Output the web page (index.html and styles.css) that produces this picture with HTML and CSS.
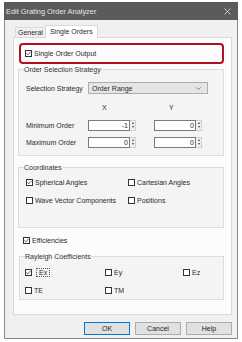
FILE: index.html
```html
<!DOCTYPE html>
<html lang="en">
<head>
    <meta charset="UTF-8">
    <title>Edit Grating Order Analyzer</title>
    <link rel="stylesheet" href="styles.css">
</head>
<body>
    <div class="window">
        <div class="titlebar">
            <span class="title">Edit Grating Order Analyzer</span>
            <svg class="close" width="7" height="7" viewBox="0 0 7 7"><path d="M0.5 0.5 L6.5 6.5 M6.5 0.5 L0.5 6.5" stroke="#d8d8d8" stroke-width="0.9"/></svg>
        </div>
        <div class="client">
            <div class="tabs">
                <div class="tab">General</div>
                <div class="tab active">Single Orders</div>
            </div>
            <div class="panel">
                <div class="highlight">
                    <label class="check">
                        <span class="box"><svg width="5" height="5" viewBox="0 0 5 5"><path d="M0.4 2.4 L1.8 3.8 L4.6 0.8" stroke="#333" stroke-width="0.8" fill="none"/></svg></span>
                        Single Order Output
                    </label>
                </div>

                <fieldset class="group strategy">
                    <legend>Order Selection Strategy</legend>
                    <div class="row combo-row">
                        <span class="label">Selection Strategy</span>
                        <div class="combo">
                            <span>Order Range</span>
                            <svg width="5" height="3" viewBox="0 0 5 3"><path d="M0.3 0.4 L2.5 2.5 L4.7 0.4" stroke="#555" stroke-width="0.7" fill="none"/></svg>
                        </div>
                    </div>
                    <div class="row axis-row">
                        <span class="label"></span>
                        <span class="axis x">X</span>
                        <span class="axis y">Y</span>
                    </div>
                    <div class="row num-row first">
                        <span class="label">Minimum Order</span>
                        <div class="spin">
                            <span class="field">-1</span>
                            <span class="arrows"><i class="up"></i><i class="down"></i></span>
                        </div>
                        <div class="spin">
                            <span class="field">0</span>
                            <span class="arrows"><i class="up"></i><i class="down"></i></span>
                        </div>
                    </div>
                    <div class="row num-row">
                        <span class="label">Maximum Order</span>
                        <div class="spin">
                            <span class="field">0</span>
                            <span class="arrows"><i class="up"></i><i class="down"></i></span>
                        </div>
                        <div class="spin">
                            <span class="field">0</span>
                            <span class="arrows"><i class="up"></i><i class="down"></i></span>
                        </div>
                    </div>
                </fieldset>

                <fieldset class="group coords">
                    <legend>Coordinates</legend>
                    <div class="row opt-row first">
                        <label class="check c1">
                            <span class="box"><svg width="5" height="5" viewBox="0 0 5 5"><path d="M0.4 2.4 L1.8 3.8 L4.6 0.8" stroke="#333" stroke-width="0.8" fill="none"/></svg></span>
                            Spherical Angles
                        </label>
                        <label class="check"><span class="box"></span>Cartesian Angles</label>
                    </div>
                    <div class="row opt-row">
                        <label class="check c1"><span class="box"></span>Wave Vector Components</label>
                        <label class="check"><span class="box"></span>Positions</label>
                    </div>
                </fieldset>

                <div class="row eff-row">
                    <label class="check">
                        <span class="box"><svg width="5" height="5" viewBox="0 0 5 5"><path d="M0.4 2.4 L1.8 3.8 L4.6 0.8" stroke="#333" stroke-width="0.8" fill="none"/></svg></span>
                        Efficiencies
                    </label>
                </div>

                <fieldset class="group rayleigh">
                    <legend>Rayleigh Coefficients</legend>
                    <div class="row opt-row first">
                        <label class="check r1">
                            <span class="box"><svg width="5" height="5" viewBox="0 0 5 5"><path d="M0.4 2.4 L1.8 3.8 L4.6 0.8" stroke="#333" stroke-width="0.8" fill="none"/></svg></span>
                            <span class="focus">Ex</span>
                        </label>
                        <label class="check r2"><span class="box"></span>Ey</label>
                        <label class="check"><span class="box"></span>Ez</label>
                    </div>
                    <div class="row opt-row">
                        <label class="check r1"><span class="box"></span>TE</label>
                        <label class="check r2"><span class="box"></span>TM</label>
                    </div>
                </fieldset>
            </div>
            <div class="buttons">
                <button class="default">OK</button>
                <button>Cancel</button>
                <button>Help</button>
            </div>
        </div>
    </div>
</body>
</html>
```

FILE: styles.css
```css
body {
    margin: 0;
    background: #fff;
    font-family: 'Liberation Sans', Arial, sans-serif;
    font-size: 7px;
    color: #2b2b2b;
}

.window {
    margin: 2px 0 0 4px;
    width: 234px;
    height: 337px;
    box-sizing: border-box;
    border: 1px solid #8a8a8a;
    border-top: none;
    background: #f0f0f0;
}

.titlebar {
    height: 18px;
    background: #5b5b5b;
    color: #e6e6e6;
    display: flex;
    align-items: center;
    justify-content: space-between;
    padding: 0 7px 0 2px;
    margin: 0 -1px;
    font-size: 7.4px;
}

.client {
    padding: 6px 5px 0 8px;
}

.tabs {
    display: flex;
    align-items: flex-end;
    height: 11px;
    padding-left: 2px;
}

.tab {
    height: 9px;
    line-height: 9px;
    padding: 0 2px;
    border: 1px solid #d9d9d9;
    border-bottom: none;
    background: #f0f0f0;
    margin-right: -1px;
}

.tab.active {
    height: 12px;
    line-height: 11px;
    background: #fff;
    padding: 0 4px;
    margin-bottom: -1px;
    position: relative;
    z-index: 1;
}

.panel {
    border: 1px solid #d9d9d9;
    background: #fcfcfc;
    height: 271px;
    padding: 5px 7px 0 4px;
}

.highlight {
    height: 17px;
    border: 2px solid #b3101e;
    border-radius: 4px;
    margin-left: 1px;
    padding-left: 4px;
    display: flex;
    align-items: center;
}

.check {
    display: flex;
    align-items: center;
    white-space: nowrap;
}

.box {
    width: 5px;
    height: 5px;
    border: 1px solid #333;
    background: #fff;
    margin-right: 2px;
    display: flex;
    align-items: center;
    justify-content: center;
}

.group {
    margin: 0;
    border: 1px solid #dcdcdc;
    background: #f4f4f4;
    padding: 0 0 0 5px;
}

.group legend {
    padding: 0;
    line-height: 9px;
    color: #333;
}

.row {
    display: flex;
    align-items: center;
}

.strategy {
    margin-top: 1px;
    padding-bottom: 7px;
}

.label {
    width: 64px;
    padding-left: 2px;
    box-sizing: border-box;
}

.combo-row {
    height: 12px;
    margin-top: 8px;
}

.combo {
    width: 120px;
    height: 12px;
    box-sizing: border-box;
    border: 1px solid #adadad;
    background: #e5e5e5;
    display: flex;
    align-items: center;
    justify-content: space-between;
    padding: 0 6px 0 3px;
}

.axis-row {
    height: 9px;
    margin-top: 9px;
}

.axis {
    width: 48px;
}

.axis.x {
    padding-left: 14px;
    box-sizing: border-box;
    margin-right: 18px;
}

.axis.y {
    padding-left: 15px;
    box-sizing: border-box;
}

.num-row {
    height: 12px;
    margin-top: 5px;
}

.num-row.first {
    margin-top: 7px;
}

.spin {
    display: flex;
    width: 48px;
    height: 11px;
    margin-right: 18px;
}

.field {
    flex: 1;
    border: 1px solid #7a7a7a;
    background: #fff;
    text-align: right;
    line-height: 9px;
    padding-right: 1px;
}

.arrows {
    width: 5px;
    display: flex;
    flex-direction: column;
    justify-content: space-around;
    align-items: center;
    border: 1px solid #cfcfcf;
    border-left: none;
    background: #f0f0f0;
}

.arrows i {
    width: 0;
    height: 0;
    border-left: 1.5px solid transparent;
    border-right: 1.5px solid transparent;
}

.arrows .up {
    border-bottom: 2px solid #444;
}

.arrows .down {
    border-top: 2px solid #444;
}

.coords {
    margin-top: 7px;
    padding-bottom: 22px;
}

.opt-row {
    height: 9px;
    margin-top: 9px;
}

.opt-row.first {
    margin-top: 6px;
}

.coords .check {
    padding-left: 2px;
}

.coords .c1 {
    width: 100px;
}

.eff-row {
    height: 9px;
    margin-top: 8px;
    padding-left: 5px;
}

.rayleigh {
    margin-top: 7px;
    margin-left: 1px;
    padding-bottom: 4px;
}

.rayleigh .opt-row.first {
    margin-top: 7px;
}

.rayleigh .r1 {
    width: 80px;
}

.rayleigh .r2 {
    width: 78px;
}

.focus {
    margin-left: 2px;
    padding: 0 2px;
    line-height: 7px;
    border: 1px dotted #555;
}

.buttons {
    display: flex;
    justify-content: flex-end;
    gap: 5px;
    margin-top: 7px;
}

button {
    width: 46px;
    height: 13px;
    font-family: inherit;
    font-size: 7px;
    color: #222;
    background: #e1e1e1;
    border: 1px solid #adadad;
    padding: 0;
}

button.default {
    border-color: #0078d7;
}
```
